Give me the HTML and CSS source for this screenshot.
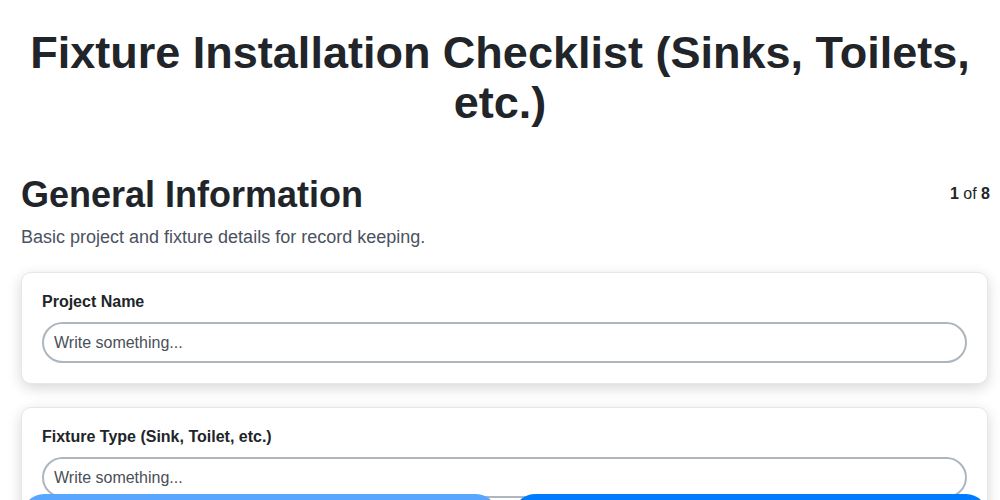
FILE: index.html
```html
<!DOCTYPE html>
<html lang="en">
<head>
<meta charset="utf-8">
<title>Fixture Installation Checklist</title>
<link rel="stylesheet" href="styles.css">
</head>
<body>
<h1 class="title">Fixture Installation Checklist (Sinks, Toilets, etc.)</h1>
<main class="section">
  <div class="section-head">
    <h2 class="section-title">General Information</h2>
    <div class="pager"><b>1</b> of <b>8</b></div>
  </div>
  <p class="section-desc">Basic project and fixture details for record keeping.</p>
  <div class="card">
    <label class="field-label">Project Name</label>
    <input class="field-input" type="text" placeholder="Write something...">
  </div>
  <div class="card">
    <label class="field-label">Fixture Type (Sink, Toilet, etc.)</label>
    <input class="field-input" type="text" placeholder="Write something...">
  </div>
</main>
<nav class="footer-nav">
  <button class="btn btn-prev">Previous</button>
  <button class="btn btn-next">Next</button>
</nav>
</body>
</html>
```

FILE: styles.css
```css
* { box-sizing: border-box; }
body {
  margin: 0;
  font-family: "Liberation Sans", Arial, sans-serif;
  color: #212529;
  background: #fff;
}
.title {
  margin: 28px 20px 0;
  text-align: center;
  font-size: 45px;
  line-height: 50px;
  font-weight: 700;
}
.section {
  padding: 45px 12px 0 21px;
}
.section-head {
  display: flex;
  justify-content: space-between;
  align-items: flex-start;
}
.section-title {
  margin: 0;
  font-size: 36px;
  line-height: 44px;
  font-weight: 700;
}
.pager {
  font-size: 16px;
  line-height: 20px;
  margin-top: 11px;
  margin-right: -2px;
}
.section-desc {
  margin: 9px 0 24px;
  font-size: 18px;
  line-height: 22px;
  color: #4a5260;
}
.card {
  display: flex;
  flex-direction: column;
  gap: 10px;
  padding: 19px 20px 20px;
  border: 1px solid #e6e7eb;
  border-radius: 10px;
  box-shadow: 0 4px 14px rgba(0, 0, 0, 0.16);
  margin-bottom: 23px;
  background: #fff;
}
.field-label {
  font-size: 16px;
  line-height: 20px;
  font-weight: 700;
  color: #212529;
}
.field-input {
  height: 41px;
  border: 2px solid #adb5bd;
  border-radius: 21px;
  padding: 0 10px;
  font-family: "Liberation Sans", Arial, sans-serif;
  font-size: 16px;
  color: #212529;
  background: #fff;
  outline: none;
}
.field-input::placeholder { color: #495057; }
.footer-nav {
  position: fixed;
  left: 22px;
  right: 12px;
  bottom: -38px;
  display: flex;
  gap: 15px;
}
.btn {
  flex: 1;
  height: 44px;
  border: none;
  border-radius: 22px;
  color: #fff;
  font-family: "Liberation Sans", Arial, sans-serif;
  font-size: 16px;
}
.btn-prev { background: #58a6ff; }
.btn-next { background: #007bff; }
```
